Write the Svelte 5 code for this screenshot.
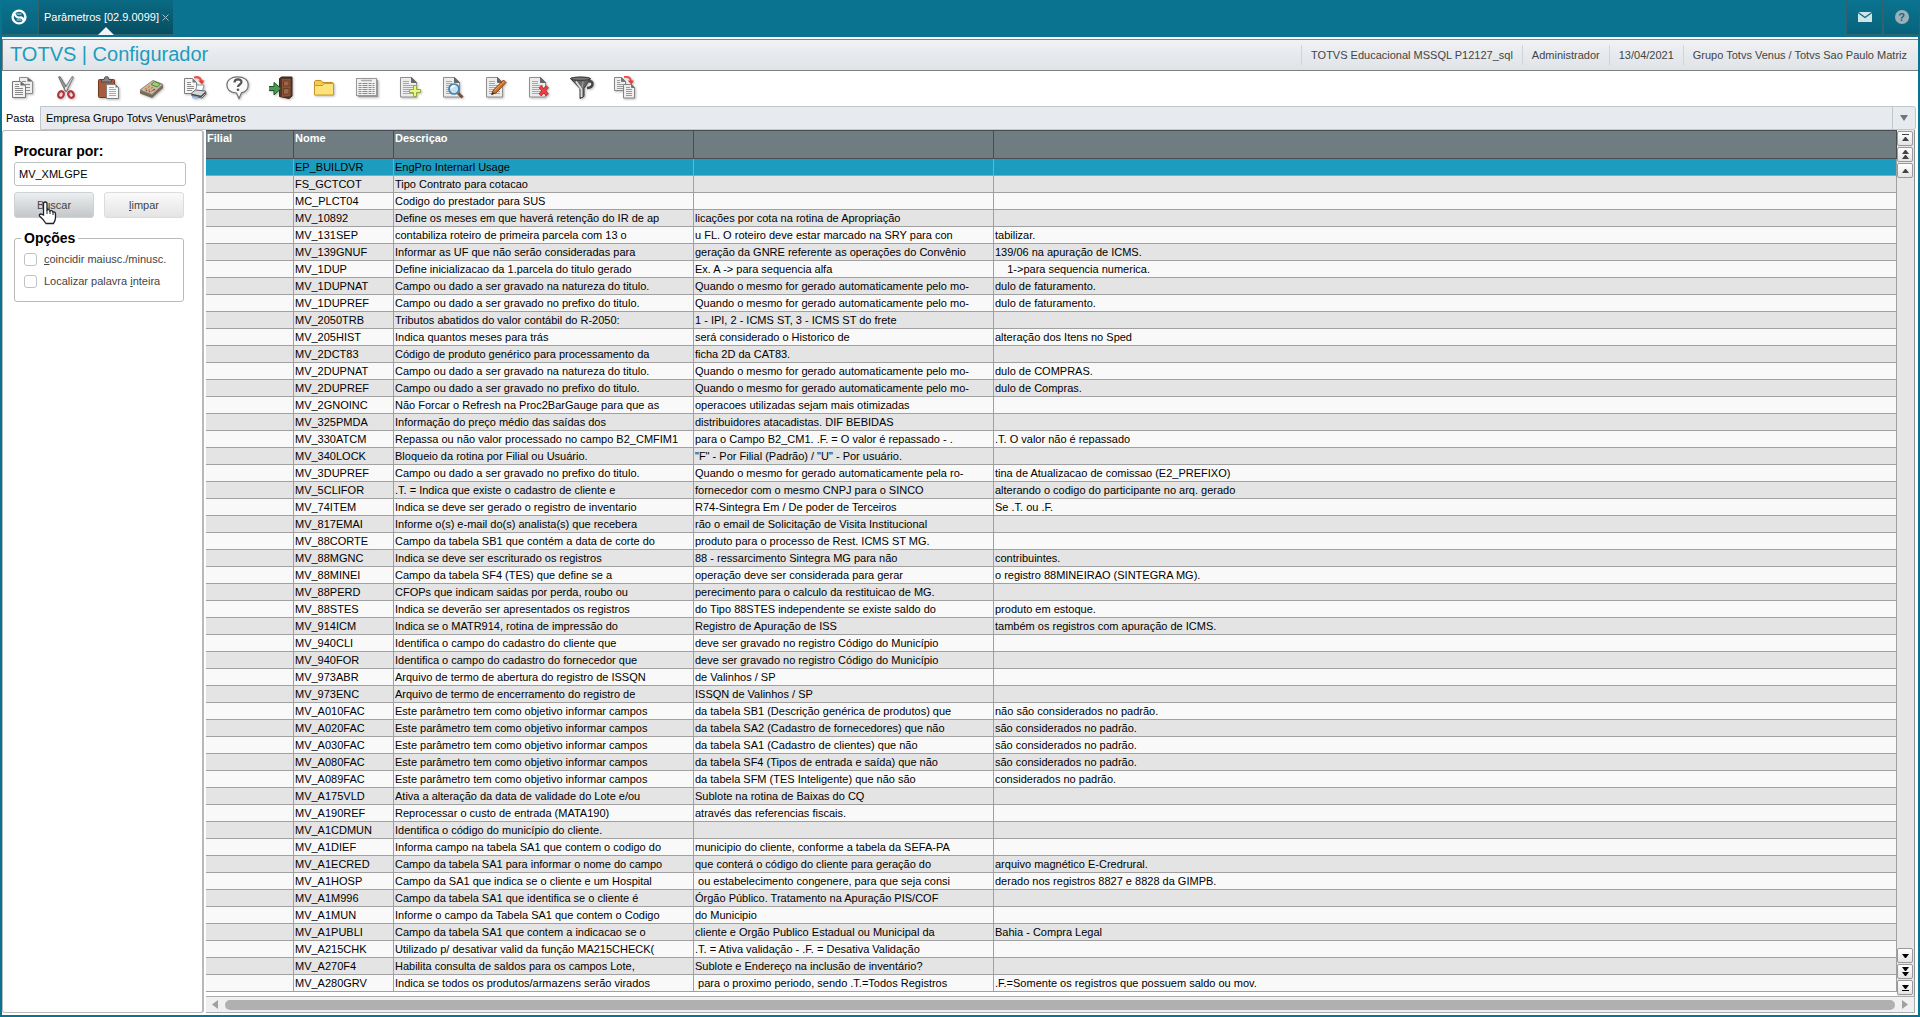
<script>
	const tools = [
		'Copiar', 'Recortar', 'Colar', 'Calculadora', 'Imprimir', 'Ajuda', 'Sair', 'Pasta',
		'Tabela', 'Incluir', 'Visualizar', 'Alterar', 'Excluir', 'Filtro', 'Duplicar'
	];

	const session = [
		'TOTVS Educacional MSSQL P12127_sql',
		'Administrador',
		'13/04/2021',
		'Grupo Totvs Venus / Totvs Sao Paulo Matriz'
	];

	const rows = [
		['EP_BUILDVR', 'EngPro Internarl Usage', '', ''],
		['FS_GCTCOT', 'Tipo Contrato para cotacao', '', ''],
		['MC_PLCT04', 'Codigo do prestador para SUS', '', ''],
		['MV_10892', 'Define os meses em que haverá retenção do IR de ap', 'licações por cota na rotina de Apropriação', ''],
		['MV_131SEP', 'contabiliza roteiro de primeira parcela com 13 o', 'u FL. O roteiro deve estar marcado na SRY para con', 'tabilizar.'],
		['MV_139GNUF', 'Informar as UF que não serão consideradas para', 'geração da GNRE referente as operações do Convênio', '139/06 na apuração de ICMS.'],
		['MV_1DUP', 'Define inicializacao da 1.parcela do titulo gerado', 'Ex. A -> para sequencia alfa', '    1->para sequencia numerica.'],
		['MV_1DUPNAT', 'Campo ou dado a ser gravado na natureza do titulo.', 'Quando o mesmo for gerado automaticamente pelo mo-', 'dulo de faturamento.'],
		['MV_1DUPREF', 'Campo ou dado a ser gravado no prefixo do titulo.', 'Quando o mesmo for gerado automaticamente pelo mo-', 'dulo de faturamento.'],
		['MV_2050TRB', 'Tributos abatidos do valor contábil do R-2050:', '1 - IPI, 2 - ICMS ST, 3 - ICMS ST do frete', ''],
		['MV_205HIST', 'Indica quantos meses para trás', 'será considerado o Historico de', 'alteração dos Itens no Sped'],
		['MV_2DCT83', 'Código de produto genérico para processamento da', 'ficha 2D da CAT83.', ''],
		['MV_2DUPNAT', 'Campo ou dado a ser gravado na natureza do titulo.', 'Quando o mesmo for gerado automaticamente pelo mo-', 'dulo de COMPRAS.'],
		['MV_2DUPREF', 'Campo ou dado a ser gravado no prefixo do titulo.', 'Quando o mesmo for gerado automaticamente pelo mo-', 'dulo de Compras.'],
		['MV_2GNOINC', 'Não Forcar o Refresh na Proc2BarGauge para que as', 'operacoes utilizadas sejam mais otimizadas', ''],
		['MV_325PMDA', 'Informação do preço médio das saídas dos', 'distribuidores atacadistas. DIF BEBIDAS', ''],
		['MV_330ATCM', 'Repassa ou não valor processado no campo B2_CMFIM1', 'para o Campo B2_CM1. .F. = O valor é repassado - .', '.T. O valor não é repassado'],
		['MV_340LOCK', 'Bloqueio da rotina por Filial ou Usuário.', '"F" - Por Filial (Padrão) / "U" - Por usuário.', ''],
		['MV_3DUPREF', 'Campo ou dado a ser gravado no prefixo do titulo.', 'Quando o mesmo for gerado automaticamente pela ro-', 'tina de Atualizacao de comissao (E2_PREFIXO)'],
		['MV_5CLIFOR', '.T. = Indica que existe o cadastro de cliente e', 'fornecedor com o mesmo CNPJ para o SINCO', 'alterando o codigo do participante no arq. gerado'],
		['MV_74ITEM', 'Indica se deve ser gerado o registro de inventario', 'R74-Sintegra Em / De poder de Terceiros', 'Se .T. ou .F.'],
		['MV_817EMAI', 'Informe o(s) e-mail do(s) analista(s) que recebera', 'rão o email de Solicitação de Visita Institucional', ''],
		['MV_88CORTE', 'Campo da tabela SB1 que contém a data de corte do', 'produto para o processo de Rest. ICMS ST MG.', ''],
		['MV_88MGNC', 'Indica se deve ser escriturado os registros', '88 - ressarcimento Sintegra MG para não', 'contribuintes.'],
		['MV_88MINEI', 'Campo da tabela SF4 (TES) que define se a', 'operação deve ser considerada para gerar', 'o registro 88MINEIRAO (SINTEGRA MG).'],
		['MV_88PERD', 'CFOPs que indicam saidas por perda, roubo ou', 'perecimento para o calculo da restituicao de MG.', ''],
		['MV_88STES', 'Indica se deverão ser apresentados os registros', 'do Tipo 88STES independente se existe saldo do', 'produto em estoque.'],
		['MV_914ICM', 'Indica se o MATR914, rotina de impressão do', 'Registro de Apuração de ISS', 'também os registros com apuração de ICMS.'],
		['MV_940CLI', 'Identifica o campo do cadastro do cliente que', 'deve ser gravado no registro Código do Município', ''],
		['MV_940FOR', 'Identifica o campo do cadastro do fornecedor que', 'deve ser gravado no registro Código do Município', ''],
		['MV_973ABR', 'Arquivo de termo de abertura do registro de ISSQN', 'de Valinhos / SP', ''],
		['MV_973ENC', 'Arquivo de termo de encerramento do registro de', 'ISSQN de Valinhos / SP', ''],
		['MV_A010FAC', 'Este parâmetro tem como objetivo informar campos', 'da tabela SB1 (Descrição genérica de produtos) que', 'não são considerados no padrão.'],
		['MV_A020FAC', 'Este parâmetro tem como objetivo informar campos', 'da tabela SA2 (Cadastro de fornecedores) que não', 'são considerados no padrão.'],
		['MV_A030FAC', 'Este parâmetro tem como objetivo informar campos', 'da tabela SA1 (Cadastro de clientes) que não', 'são considerados no padrão.'],
		['MV_A080FAC', 'Este parâmetro tem como objetivo informar campos', 'da tabela SF4 (Tipos de entrada e saída) que não', 'são considerados no padrão.'],
		['MV_A089FAC', 'Este parâmetro tem como objetivo informar campos', 'da tabela SFM (TES Inteligente) que não são', 'considerados no padrão.'],
		['MV_A175VLD', 'Ativa a alteração da data de validade do Lote e/ou', 'Sublote na rotina de Baixas do CQ', ''],
		['MV_A190REF', 'Reprocessar o custo de entrada (MATA190)', 'através das referencias fiscais.', ''],
		['MV_A1CDMUN', 'Identifica o código do município do cliente.', '', ''],
		['MV_A1DIEF', 'Informa campo na tabela SA1 que contem o codigo do', 'municipio do cliente, conforme a tabela da SEFA-PA', ''],
		['MV_A1ECRED', 'Campo da tabela SA1 para informar o nome do campo', 'que conterá o código do cliente para geração do', 'arquivo magnético E-Credrural.'],
		['MV_A1HOSP', 'Campo da SA1 que indica se o cliente e um Hospital', ' ou estabelecimento congenere, para que seja consi', 'derado nos registros 8827 e 8828 da GIMPB.'],
		['MV_A1M996', 'Campo da tabela SA1 que identifica se o cliente é', 'Órgão Público. Tratamento na Apuração PIS/COF', ''],
		['MV_A1MUN', 'Informe o campo da Tabela SA1 que contem o Codigo', 'do Municipio', ''],
		['MV_A1PUBLI', 'Campo da tabela SA1 que contem a indicacao se o', 'cliente e Orgão Publico Estadual ou Municipal da', 'Bahia - Compra Legal'],
		['MV_A215CHK', 'Utilizado p/ desativar valid da função MA215CHECK(', '.T. = Ativa validação - .F. = Desativa Validação', ''],
		['MV_A270F4', 'Habilita consulta de saldos para os campos Lote,', 'Sublote e Endereço na inclusão de inventário?', ''],
		['MV_A280GRV', 'Indica se todos os produtos/armazens serão virados', ' para o proximo periodo, sendo .T.=Todos Registros', '.F.=Somente os registros que possuem saldo ou mov.']
	];

	let search = $state('MV_XMLGPE');
	let matchCase = $state(false);
	let wholeWord = $state(false);
	let selected = $state(0);
</script>

{#snippet page()}
	<path d="M2.500 1.500h11l5 5v14.500h-16z" fill="#ececec" stroke="#8f8f8f" />
	<path d="M13.500 1.500v5h5z" fill="#666" stroke="#666" />
	<path d="M5 5.500h6M5 7.500h6M5 9.500h11M5 11.500h11M5 13.500h11M5 15.500h11M5 17.500h11" stroke="#a8a8a8" />
{/snippet}

{#snippet toolIcon(name)}
	<svg width="24" height="24" viewBox="0 0 24 24" fill="none" aria-hidden="true">
		{#if name === 'Copiar'}
			<path d="M8.500 1.500h8l5 4v12h-13z" fill="#eee" stroke="#8b8b8b" />
			<path d="M16.500 1.500v4h5z" fill="#666" />
			<path d="M11 5.500h4M11 8.500h8M11 11.500h8M11 14.500h8" stroke="#8b8b8b" />
			<path d="M1.500 5.500h8l5 4v12h-13z" fill="#f3f3f3" stroke="#777" />
			<path d="M9.500 5.500v4h5z" fill="#666" />
			<path d="M4 8.500h4M4 10.500h4M4 12.500h8M4 14.500h8M4 16.500h8M4 18.500h8" stroke="#8b8b8b" />
		{:else if name === 'Recortar'}
			<path d="M4.500 1l1.500-.5L14 13.500l-2.500 2z" fill="#999" stroke="#555" stroke-width=".7" />
			<path d="M19.500 1L18 .5 10 13.500l2.500 2z" fill="#ccc" stroke="#555" stroke-width=".7" />
			<ellipse cx="7" cy="18.500" rx="2.700" ry="3.400" transform="rotate(25 7 18.500)" stroke="#b5333a" stroke-width="2.200" />
			<ellipse cx="17" cy="18.500" rx="2.700" ry="3.400" transform="rotate(-25 17 18.500)" stroke="#b5333a" stroke-width="2.200" />
			<circle cx="12" cy="12" r="1" fill="#eee" />
		{:else if name === 'Colar'}
			<rect x="1.500" y="3.500" width="16" height="18" rx="1" fill="#a85c3c" stroke="#713a20" />
			<path d="M4.500 6V3.500H7Q7.500.5 9.500.5t2.500 3h2.500V6z" fill="#888" stroke="#4c4c4c" />
			<path d="M9.500 8.500h9l3 3v11h-12z" fill="#f7f7f7" stroke="#808080" />
			<path d="M18.500 8.500v3h3z" fill="#777" />
			<path d="M12 11.500h5M12 13.500h7M12 15.500h7M12 17.500h7M12 19.500h7" stroke="#aaa" />
		{:else if name === 'Calculadora'}
			<path d="M0 14.500L13 5l10 4v3L12 22 0 17.500z" fill="#75695c" />
			<path d="M0 14L13 4.500 23 8.500 12 18.500z" fill="#c6bda9" stroke="#91866f" />
			<path d="M11 8.500l3.500-3 6 2.500-3.500 3z" fill="#98d36b" stroke="#587e40" />
			<path d="M5 13.500l2-1.500M8 14.500l2-1.500M11 15.500l2-1.500M8 11.500l2-1.500M11 12.500l2-1.500" stroke="#e4763f" stroke-width="1.300" />
			<path d="M13 14.500l2-1.500M9 16l1-1M6 15l1-1" stroke="#655e51" stroke-width="1.200" />
		{:else if name === 'Imprimir'}
			<path d="M1.500 2.500h8l4 4v11h-12z" fill="#f5f5f5" stroke="#808080" />
			<path d="M9.500 2.500v4h4z" fill="#777" />
			<path d="M4 6.500h4M4 8.500h4M4 10.500h7M4 12.500h7M4 14.500h5" stroke="#8d8d8d" />
			<path d="M11 1.500q6-1.500 7.500 4" stroke="#e9534a" stroke-width="2.200" />
			<path d="M15 4.500h6.500l-2.500 4z" fill="#e33d37" />
			<path d="M14 9h7l-1.500 6h-7z" fill="#fff" stroke="#8897aa" />
			<path d="M8.500 17l4-3 10 1 .5 3-4 4-10-2z" fill="#d4d7dc" stroke="#62666c" />
			<path d="M9 18.500l9 2 4.500-4" stroke="#444" stroke-width="1.400" />
			<path d="M10 20l5 1-1 2-5-1z" fill="#8dbcf0" />
		{:else if name === 'Ajuda'}
			<path d="M11.500.8c6.500 0 10.700 3 10.700 8.200 0 4-2.500 6.700-6.700 7.800L13 22.500l-2.500-5.500C4.500 16.500.9 13.500.9 9 .9 4.200 5 .8 11.500.8z" fill="#f9f9f9" stroke="#707070" stroke-width="1.200" />
			<path d="M8.500 6.500c0-4 7-4 7-.5 0 2.500-3.500 2.500-3.500 5" stroke="#555" stroke-width="2.200" />
			<circle cx="12" cy="13.800" r="1.300" fill="#555" />
		{:else if name === 'Sair'}
			<path d="M10.500 2.500l2-1.500h10.500v19l-3 2.500-9.500-2z" fill="#533525" stroke="#3d271c" />
			<path d="M13 3h8.500v17l-8.500 1z" fill="#8a5439" />
			<path d="M14.500 5h5.500v5h-5.500zM14.500 12.500h5.500v5.500l-5.500.5z" fill="#9f6546" stroke="#6a3e29" />
			<path d="M-.5 10.500h5.500v-4l7 6-7 6.500v-4.500H-.5z" fill="#4f9a52" stroke="#1f5427" />
		{:else if name === 'Pasta'}
			<path d="M2.500 18.500v-13l1-1h5.500l1.500 2h10v12z" fill="#f6c94f" stroke="#c18f21" />
			<path d="M2.500 19V9.500h8l2-2h9V19z" fill="#fee37c" stroke="#c9982a" />
		{:else if name === 'Tabela'}
			<path d="M3 4h20v17H3z" fill="#999" />
			<rect x="1.500" y="2.500" width="20" height="17" fill="#f0f0f0" stroke="#999" />
			<path d="M6 4.500h11" stroke="#aaa" stroke-width="1.500" />
			<path d="M3.500 7.500h16M3.500 9.500h16M3.500 11.500h16M3.500 13.500h16M3.500 15.500h16M3.500 17.500h16" stroke="#8b8b8b" stroke-dasharray="3 1 5 1 3 1 2 9" />
		{:else if name === 'Incluir'}
			{@render page()}
			<path d="M15.500 9.500h3v4h4v3h-4v4h-3v-4h-4v-3h4z" fill="#e7f780" stroke="#94aa38" />
		{:else if name === 'Visualizar'}
			{@render page()}
			<path d="M17 17l4.500 4.500" stroke="#7c5034" stroke-width="3" />
			<circle cx="13" cy="13" r="5" fill="#c0e3f7" stroke="#477da5" stroke-width="1.700" />
			<path d="M10 12.500q1-3 4-2.500" stroke="#fff" stroke-width="1.500" />
		{:else if name === 'Alterar'}
			{@render page()}
			<path d="M7.500 18.500l2-4.500L19.500 4l2.500 2.500L12 17z" fill="#cc722b" stroke="#824215" />
			<path d="M10.500 14.500l9.500-9" stroke="#f3a058" />
			<path d="M7.500 19l1-3 2 1.500z" fill="#333" />
		{:else if name === 'Excluir'}
			{@render page()}
			<path d="M13 10.500l7.500 8.500M20.500 10.500L13 19" stroke="#a82224" stroke-width="3.600" />
			<path d="M13 10.500l7.500 8.500M20.500 10.500L13 19" stroke="#ed4144" stroke-width="2.400" />
		{:else if name === 'Filtro'}
			<path d="M17 12q5.500-.5 5.500-4t-4-2.500" stroke="#444" stroke-width="2.500" />
			<path d="M.5 2.500Q11 0 20.500 2.500L14 12.500v8l-4 2v-10z" fill="#666" stroke="#383838" />
			<ellipse cx="10.500" cy="2.700" rx="9.800" ry="1.700" fill="#777" stroke="#383838" />
			<path d="M6 5.500l5.500 7.500v8" stroke="#ddd" stroke-width="1.800" />
			<path d="M13 5.500l-1 6" stroke="#999" stroke-width="1.500" />
		{:else}
			<path d="M1.500 1.500h7l4 4v9h-11z" fill="#eee" stroke="#858585" />
			<path d="M8.500 1.500v4h4z" fill="#777" stroke="#777" />
			<path d="M4 4.500h3M4 6.500h3M4 8.500h6M4 10.500h6M4 12.500h6" stroke="#999" />
			<path d="M10.500 8.500h8l3 3v10.500h-11z" fill="#eee" stroke="#858585" />
			<path d="M18.500 8.500v3h3z" fill="#777" stroke="#777" />
			<path d="M13 11.500h4M13 13.500h6M13 15.500h6M13 17.500h6M13 19.500h6" stroke="#999" />
			<path d="M11 1q6-1 7 4" stroke="#e9534a" stroke-width="2" />
			<path d="M14.500 4.500H21L18.500 8.500z" fill="#e33d37" />
		{/if}
	</svg>
{/snippet}

{#snippet scrollButton(label, d)}
	<button class="scroll-button" aria-label={label}>
		<svg width="9" height="11" viewBox="0 0 9 11" aria-hidden="true"><path {d} fill="currentColor" /></svg>
	</button>
{/snippet}

<div class="app">
	<header class="topbar">
		<button class="top-button home" aria-label="Início">
			<svg width="16" height="16" viewBox="0 0 16 16" fill="none" aria-hidden="true">
				<circle cx="8" cy="8" r="6.400" stroke="#fff" stroke-width="2.400" />
				<path d="M3.500 4.500Q5 9 8.500 8.500T12.500 11.500" stroke="#fff" stroke-width="2.200" />
				<path d="M5.500 5h5M5.500 11h5" stroke="#fff" stroke-width=".8" />
			</svg>
		</button>
		<div class="tab">
			<a href="#parametros">Parâmetros [02.9.0099]</a>
			<button class="tab-close" aria-label="Fechar">
				<svg width="7" height="7" viewBox="0 0 7 7" aria-hidden="true"><path d="M.5.5l6 6M6.500.5l-6 6" stroke="#9fc4cf" /></svg>
			</button>
			<span class="tab-arrow"></span>
		</div>
		<div class="top-actions">
			<button class="top-button" aria-label="Mensagens">
				<svg width="14" height="10" viewBox="0 0 14 10" aria-hidden="true">
					<rect width="14" height="10" fill="#d3e4e9" />
					<path d="M0 .5l7 5 7-5" fill="none" stroke="#0a6d87" stroke-width="1.400" />
				</svg>
			</button>
			<button class="top-button help" aria-label="Ajuda"><span>?</span></button>
		</div>
	</header>

	<div class="window">
		<div class="titlebar">
			<h1>TOTVS | Configurador</h1>
			<ul class="session">
				{#each session as item}
					<li>{item}</li>
				{/each}
			</ul>
		</div>

		<div class="toolbar">
			{#each tools as tool}
				<button class="tool" aria-label={tool}>{@render toolIcon(tool)}</button>
			{/each}
		</div>

		<div class="path">
			<span class="path-label">Pasta</span>
			<div class="path-box">
				<span>Empresa Grupo Totvs Venus\Parâmetros</span>
				<button class="path-drop" aria-label="Abrir pastas">
					<svg width="8" height="6" viewBox="0 0 8 6" aria-hidden="true"><path d="M0 0h8L4 6z" fill="#6d777d" /></svg>
				</button>
			</div>
		</div>

		<main class="content">
			<aside class="side">
				<label class="side-title" for="search">Procurar por:</label>
				<input id="search" class="search" type="text" bind:value={search} />
				<div class="side-buttons">
					<button class="push hover">
						<span>Buscar</span>
						<svg class="pointer" width="19" height="24" viewBox="0 0 19 24" aria-hidden="true">
							<path d="M5.500 14V3q0-2 1.800-2T9 3v6q3-1 3 1 2.500-1 3 1 2.500-.5 2.500 2v4q0 2-2 5.500H8Q5 18 1.500 15q-.5-2 1.500-2z" fill="#fff" stroke="#1d1f2b" stroke-width="1.300" />
							<path d="M9 9v4M12 10v3M15 11v3" stroke="#1d1f2b" />
						</svg>
					</button>
					<button class="push" onclick={() => (search = '')}><span><u>l</u>impar</span></button>
				</div>
				<fieldset class="options">
					<legend>Opções</legend>
					<label><input type="checkbox" bind:checked={matchCase} /><span><u>c</u>oincidir maiusc./minusc.</span></label>
					<label><input type="checkbox" bind:checked={wholeWord} /><span>Localizar palavra <u>i</u>nteira</span></label>
				</fieldset>
			</aside>

			<section class="grid">
				<div class="grid-body">
					<table>
						<colgroup>
							<col class="col-filial" />
							<col class="col-nome" />
							<col class="col-text" />
							<col class="col-text" />
							<col />
						</colgroup>
						<thead>
							<tr>
								<th>Filial</th>
								<th>Nome</th>
								<th>Descriçao</th>
								<th></th>
								<th></th>
							</tr>
						</thead>
						<tbody>
							{#each rows as row, index}
								<tr class:selected={selected === index} onclick={() => (selected = index)}>
									<td></td>
									{#each row as cell}
										<td>{cell}</td>
									{/each}
								</tr>
							{/each}
						</tbody>
					</table>
				</div>
				<div class="vscroll">
					<div class="scroll-group up">
						{@render scrollButton('Primeiro', 'M1 1h7v1H1zM4 4h1l3 4H1z')}
						{@render scrollButton('Página anterior', 'M4 1h1l3 4H1zM4 6h1l3 4H1z')}
						{@render scrollButton('Anterior', 'M4 4h1l3 4H1z')}
					</div>
					<div class="scroll-group">
						{@render scrollButton('Próximo', 'M1 4h7L5 8H4z')}
						{@render scrollButton('Próxima página', 'M1 1h7L5 5H4zM1 6h7l-3 4H4z')}
						{@render scrollButton('Último', 'M1 3h7L5 7H4zM1 8h7v1H1z')}
					</div>
				</div>
				<div class="hscroll">
					<button aria-label="Esquerda"><svg width="6" height="9" viewBox="0 0 6 9"><path d="M6 0v9L0 4.500z" fill="#a0a0a0" /></svg></button>
					<div class="thumb"></div>
					<button aria-label="Direita"><svg width="6" height="9" viewBox="0 0 6 9"><path d="M0 0v9l6-4.500z" fill="#a0a0a0" /></svg></button>
				</div>
			</section>
		</main>
	</div>
</div>

<style>
	:global(body) {
		background-color: #0a7490;
	}

	.app {
		display: flex;
		flex-direction: column;
		box-sizing: border-box;
		min-height: 100vh;
		padding: 0 2px 2px;
		background-color: #0a7490;
		font-family: 'Liberation Sans', Arial, sans-serif;
		font-size: 11px;
		color: #000;
	}

	button, input {
		box-sizing: border-box;
		margin: 0;
		padding: 0;
		border: none;
		background: none;
		font: inherit;
		color: inherit;
	}

	.topbar {
		display: flex;
		height: 35px;
		margin: 0 -2px 2px 0;
	}

	.top-button {
		display: flex;
		align-items: center;
		justify-content: center;
		width: 37px;
		border: solid #30626f;
		border-width: 0 1px 1px 0;
		background: linear-gradient(#0a7490, #08637c);
	}

	.top-actions .top-button {
		border-left-width: 1px;
	}

	.home {
		padding-right: 2px;
	}

	.tab {
		position: relative;
		display: flex;
		align-items: center;
		gap: 3px;
		padding: 0 4px 0 5px;
		border-bottom: 1px solid #30626f;
		background: linear-gradient(#0a6a84, #074e62);
	}

	.tab a {
		color: #fff;
		text-decoration: none;
	}

	.tab-close {
		display: flex;
	}

	.tab-arrow {
		position: absolute;
		left: 50%;
		bottom: -1px;
		margin-left: -8px;
		border: solid transparent;
		border-width: 0 8px 8px;
		border-bottom-color: #f1f3f5;
	}

	.top-actions {
		display: flex;
		margin-left: auto;
	}

	.help span {
		width: 14px;
		border-radius: 7px;
		background-color: #9db0b8;
		line-height: 14px;
		font-weight: bold;
		color: #0a6d87;
	}

	.window {
		display: flex;
		flex-direction: column;
		flex: 1;
		padding-bottom: 2px;
		background-color: #fff;
	}

	.titlebar {
		display: flex;
		align-items: center;
		justify-content: space-between;
		height: 30px;
		margin-top: 2px;
		border: 1px solid #808080;
		border-width: 1px 0 1px 1px;
		background: linear-gradient(#f0f2f4, #dfe3e7);
	}

	h1 {
		margin: 0 7px 2px;
		font-weight: normal;
		font-size: 20px;
		line-height: 24px;
		color: #1c9dbf;
	}

	.session {
		display: flex;
		margin: 0 2px 0 0;
		padding: 0;
		list-style: none;
		color: #444;
	}

	.session li {
		padding: 0 9px;
		border-left: 1px solid #d2d5d8;
		line-height: 20px;
	}

	.toolbar {
		display: flex;
		height: 34px;
		margin: 0 0 1px -1px;
	}

	.tool {
		display: flex;
		align-items: center;
		justify-content: center;
		width: 43px;
	}

	.tool svg {
		filter: drop-shadow(1px 1px 1px #0004);
	}

	.path {
		display: flex;
		align-items: center;
		height: 24px;
		padding-right: 2px;
	}

	.path-label {
		box-sizing: border-box;
		width: 38px;
		padding-left: 4px;
	}

	.path-box {
		display: flex;
		align-items: center;
		flex: 1;
		box-sizing: border-box;
		height: 24px;
		padding-left: 5px;
		border: 1px solid #c0c6ca;
		border-radius: 0 3px 3px 0;
		background-color: #e7ebef;
	}

	.path-drop {
		display: flex;
		align-items: center;
		justify-content: center;
		align-self: stretch;
		width: 23px;
		margin-left: auto;
		border-left: 1px solid #c0c6ca;
	}

	.content {
		display: flex;
		flex: 1;
		gap: 2px;
		padding-right: 3px;
	}

	.side {
		box-sizing: border-box;
		width: 202px;
		padding: 12px 11px;
		border: 1px solid #b9b9b9;
		border-right-width: 2px;
		border-radius: 3px;
		color: #444;
	}

	.side-title, legend {
		font-weight: bold;
		font-size: 14px;
		line-height: 16px;
		color: #000;
	}

	.side-title {
		display: block;
	}

	.search {
		width: 172px;
		height: 24px;
		margin-top: 3px;
		padding: 0 4px;
		border: 1px solid #bcc2c4;
		border-radius: 3px;
		color: #000;
	}

	.side-buttons {
		display: flex;
		gap: 10px;
		margin-top: 6px;
	}

	.push {
		position: relative;
		width: 80px;
		height: 26px;
		border: 1px solid #dcdcdc;
		border-radius: 3px;
		background: linear-gradient(#fafafa, #e4e4e4);
	}

	.push.hover {
		border-color: #cfd2d4;
		background: linear-gradient(#eceeef, #c3c7c9);
	}

	.pointer {
		position: absolute;
		left: 23px;
		top: 8px;
	}

	.options {
		display: flex;
		flex-direction: column;
		gap: 6px;
		box-sizing: border-box;
		width: 170px;
		margin: 12px 0 0;
		padding: 5px 9px 12px;
		border: 1px solid #b9b9b9;
		border-radius: 3px;
	}

	legend {
		margin-left: -3px;
		padding: 0 3px;
	}

	.options label {
		display: flex;
		align-items: center;
		gap: 7px;
		height: 16px;
		white-space: nowrap;
	}

	.options input {
		appearance: none;
		width: 13px;
		height: 13px;
		border: 1px solid #bcc4c8;
		border-radius: 3px;
		background-color: #fff;
	}

	.options input:checked {
		background-color: #1c9dbf;
	}

	.grid {
		display: grid;
		grid-template-columns: minmax(0, 1fr) 18px;
		grid-template-rows: 1fr 17px;
		flex: 1;
		min-width: 0;
	}

	.grid-body {
		padding-bottom: 4px;
		overflow: hidden;
	}

	table {
		width: 100%;
		table-layout: fixed;
		border-collapse: separate;
		border-spacing: 0;
		line-height: 16px;
	}

	.col-filial {
		width: 88px;
	}

	.col-nome {
		width: 100px;
	}

	.col-text {
		width: 300px;
	}

	th {
		box-sizing: border-box;
		height: 29px;
		padding: 0 1px;
		border: solid #474d50;
		border-width: 1px 1px 1px 0;
		background-color: #6f7d82;
		line-height: 14px;
		text-align: left;
		vertical-align: top;
		color: #fff;
	}

	td {
		height: 16px;
		padding: 0 1px;
		border: solid #a0a0a0;
		border-width: 0 1px 1px 0;
		background-color: #f9f9f9;
		white-space: pre;
		overflow: hidden;
	}

	tr:nth-child(even) td {
		background-color: #e4e4e4;
	}

	tr.selected td {
		background-color: #1c9dbf;
	}

	.vscroll {
		display: flex;
		flex-direction: column;
		justify-content: space-between;
		padding: 1px 1px 1px 0;
		border-right: 1px solid #909090;
		background-color: #e6e6e6;
	}

	.scroll-group {
		display: flex;
		flex-direction: column;
		gap: 1px;
	}

	.scroll-group.up {
		color: #444;
	}

	.scroll-button {
		display: flex;
		align-items: center;
		justify-content: center;
		width: 16px;
		height: 15px;
		border: 1px solid #999;
		border-radius: 2px;
		background: linear-gradient(#fff, #e4e4e4);
	}

	.hscroll {
		display: flex;
		align-items: center;
		grid-column: 1 / -1;
		box-sizing: border-box;
		border: solid #a8adaf;
		border-width: 1px 1px 1px 0;
		background-color: #f0f0f0;
	}

	.hscroll button {
		display: flex;
		align-items: center;
		justify-content: center;
		width: 18px;
	}

	.thumb {
		flex: 1;
		height: 10px;
		margin: 0 1px;
		border-radius: 5px;
		background-color: #b0b0b0;
	}
</style>
